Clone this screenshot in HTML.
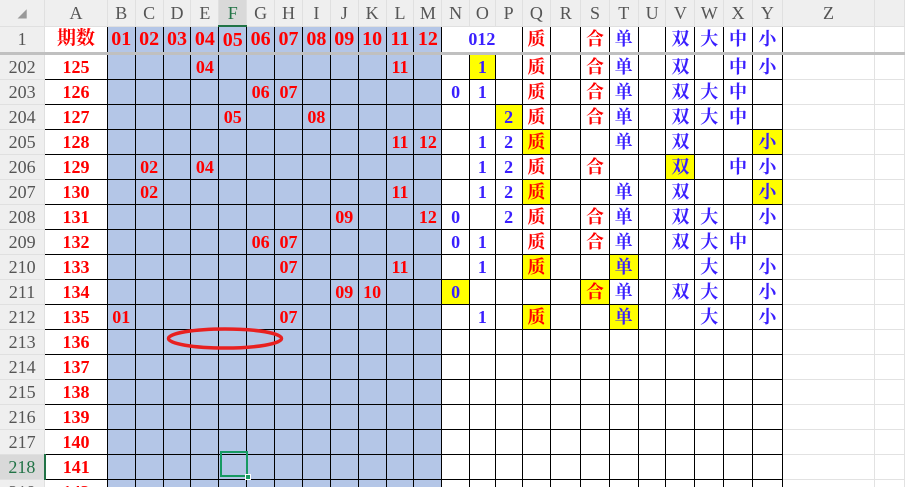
<!DOCTYPE html>
<html><head><meta charset="utf-8">
<style>
html,body{margin:0;padding:0;background:#fff;width:905px;height:487px;overflow:hidden;position:relative}
table{border-collapse:collapse;table-layout:fixed;position:absolute;left:0;top:0}
td{padding:0;height:24px;text-align:center;vertical-align:middle;border:1px solid #000;font-family:"Liberation Serif","Noto Serif CJK SC",serif;font-weight:bold;font-size:18px;color:#f00;white-space:nowrap;overflow:hidden;line-height:20px}
tr.h td{height:25px;background:#efefef;border:1px solid #e0e0e0;border-top:none;font-weight:normal;color:#555;font-size:18px;font-family:"Liberation Serif",serif}
td.rh{background:#efefef;border:1px solid #e0e0e0;border-left:none;font-weight:normal;color:#555;font-size:18px;font-family:"Liberation Serif",serif}
td.b{background:#b4c6e7}
td.y{background:#ff0}
td.u{color:#3a1fff}
td.q,td.u{font-family:"Liberation Serif","Noto Serif CJK SC",serif}
td.z{border:1px solid #e2e2e2}
tr.r1 td{height:25px}
tr.r1 td.b{font-size:20px}
tr.r1 td.a{border-top:none;font-size:19px}
</style></head><body>
<table>
<colgroup><col style="width:45px"><col style="width:63px">
<col style="width:28px"><col style="width:28px"><col style="width:28px"><col style="width:28px"><col style="width:28px"><col style="width:28px"><col style="width:28px"><col style="width:28px"><col style="width:28px"><col style="width:28px"><col style="width:28px"><col style="width:28px">
<col style="width:28px"><col style="width:26px"><col style="width:27px"><col style="width:29px"><col style="width:30px"><col style="width:29px"><col style="width:29px"><col style="width:28px"><col style="width:29px"><col style="width:29px"><col style="width:29px"><col style="width:30px"><col style="width:94px"><col style="width:30px"></colgroup>
<tr class="h"><td style="border-left:none;color:#999;font-size:12px">◢</td><td>A</td><td>B</td><td>C</td><td>D</td><td>E</td><td style="background:#d9d9d9;color:#217346;border-bottom:2px solid #217346">F</td><td>G</td><td>H</td><td>I</td><td>J</td><td>K</td><td>L</td><td>M</td><td>N</td><td>O</td><td>P</td><td>Q</td><td>R</td><td>S</td><td>T</td><td>U</td><td>V</td><td>W</td><td>X</td><td>Y</td><td>Z</td><td></td></tr>
<tr class="r1" style="border-bottom:3px solid #c0c0c0"><td class="rh">1</td><td class="a q" style="border-left:none">期数</td><td class="b">01</td><td class="b">02</td><td class="b">03</td><td class="b">04</td><td class="b">05</td><td class="b">06</td><td class="b">07</td><td class="b">08</td><td class="b">09</td><td class="b">10</td><td class="b">11</td><td class="b">12</td><td class="u" colspan="3" style="border-top:none">012</td><td class="q" style="border-top:none">质</td><td style="border-top:none"></td><td class="q" style="border-top:none">合</td><td class="u" style="border-top:none">单</td><td style="border-top:none"></td><td class="u" style="border-top:none">双</td><td class="u" style="border-top:none">大</td><td class="u" style="border-top:none">中</td><td class="u" style="border-top:none">小</td><td class="z"></td><td class="z"></td></tr>
<tr><td class="rh">202</td><td>125</td><td class="b"></td><td class="b"></td><td class="b"></td><td class="b">04</td><td class="b"></td><td class="b"></td><td class="b"></td><td class="b"></td><td class="b"></td><td class="b"></td><td class="b">11</td><td class="b"></td><td></td><td class="u y">1</td><td></td><td class="q">质</td><td></td><td class="q">合</td><td class="u">单</td><td></td><td class="u">双</td><td></td><td class="u">中</td><td class="u">小</td><td class="z"></td><td class="z"></td></tr>
<tr><td class="rh">203</td><td>126</td><td class="b"></td><td class="b"></td><td class="b"></td><td class="b"></td><td class="b"></td><td class="b">06</td><td class="b">07</td><td class="b"></td><td class="b"></td><td class="b"></td><td class="b"></td><td class="b"></td><td class="u">0</td><td class="u">1</td><td></td><td class="q">质</td><td></td><td class="q">合</td><td class="u">单</td><td></td><td class="u">双</td><td class="u">大</td><td class="u">中</td><td></td><td class="z"></td><td class="z"></td></tr>
<tr><td class="rh">204</td><td>127</td><td class="b"></td><td class="b"></td><td class="b"></td><td class="b"></td><td class="b">05</td><td class="b"></td><td class="b"></td><td class="b">08</td><td class="b"></td><td class="b"></td><td class="b"></td><td class="b"></td><td></td><td></td><td class="u y">2</td><td class="q">质</td><td></td><td class="q">合</td><td class="u">单</td><td></td><td class="u">双</td><td class="u">大</td><td class="u">中</td><td></td><td class="z"></td><td class="z"></td></tr>
<tr><td class="rh">205</td><td>128</td><td class="b"></td><td class="b"></td><td class="b"></td><td class="b"></td><td class="b"></td><td class="b"></td><td class="b"></td><td class="b"></td><td class="b"></td><td class="b"></td><td class="b">11</td><td class="b">12</td><td></td><td class="u">1</td><td class="u">2</td><td class="q y">质</td><td></td><td></td><td class="u">单</td><td></td><td class="u">双</td><td></td><td></td><td class="u y">小</td><td class="z"></td><td class="z"></td></tr>
<tr><td class="rh">206</td><td>129</td><td class="b"></td><td class="b">02</td><td class="b"></td><td class="b">04</td><td class="b"></td><td class="b"></td><td class="b"></td><td class="b"></td><td class="b"></td><td class="b"></td><td class="b"></td><td class="b"></td><td></td><td class="u">1</td><td class="u">2</td><td class="q">质</td><td></td><td class="q">合</td><td></td><td></td><td class="u y">双</td><td></td><td class="u">中</td><td class="u">小</td><td class="z"></td><td class="z"></td></tr>
<tr><td class="rh">207</td><td>130</td><td class="b"></td><td class="b">02</td><td class="b"></td><td class="b"></td><td class="b"></td><td class="b"></td><td class="b"></td><td class="b"></td><td class="b"></td><td class="b"></td><td class="b">11</td><td class="b"></td><td></td><td class="u">1</td><td class="u">2</td><td class="q y">质</td><td></td><td></td><td class="u">单</td><td></td><td class="u">双</td><td></td><td></td><td class="u y">小</td><td class="z"></td><td class="z"></td></tr>
<tr><td class="rh">208</td><td>131</td><td class="b"></td><td class="b"></td><td class="b"></td><td class="b"></td><td class="b"></td><td class="b"></td><td class="b"></td><td class="b"></td><td class="b">09</td><td class="b"></td><td class="b"></td><td class="b">12</td><td class="u">0</td><td></td><td class="u">2</td><td class="q">质</td><td></td><td class="q">合</td><td class="u">单</td><td></td><td class="u">双</td><td class="u">大</td><td></td><td class="u">小</td><td class="z"></td><td class="z"></td></tr>
<tr><td class="rh">209</td><td>132</td><td class="b"></td><td class="b"></td><td class="b"></td><td class="b"></td><td class="b"></td><td class="b">06</td><td class="b">07</td><td class="b"></td><td class="b"></td><td class="b"></td><td class="b"></td><td class="b"></td><td class="u">0</td><td class="u">1</td><td></td><td class="q">质</td><td></td><td class="q">合</td><td class="u">单</td><td></td><td class="u">双</td><td class="u">大</td><td class="u">中</td><td></td><td class="z"></td><td class="z"></td></tr>
<tr><td class="rh">210</td><td>133</td><td class="b"></td><td class="b"></td><td class="b"></td><td class="b"></td><td class="b"></td><td class="b"></td><td class="b">07</td><td class="b"></td><td class="b"></td><td class="b"></td><td class="b">11</td><td class="b"></td><td></td><td class="u">1</td><td></td><td class="q y">质</td><td></td><td></td><td class="u y">单</td><td></td><td></td><td class="u">大</td><td></td><td class="u">小</td><td class="z"></td><td class="z"></td></tr>
<tr><td class="rh">211</td><td>134</td><td class="b"></td><td class="b"></td><td class="b"></td><td class="b"></td><td class="b"></td><td class="b"></td><td class="b"></td><td class="b"></td><td class="b">09</td><td class="b">10</td><td class="b"></td><td class="b"></td><td class="u y">0</td><td></td><td></td><td></td><td></td><td class="q y">合</td><td class="u">单</td><td></td><td class="u">双</td><td class="u">大</td><td></td><td class="u">小</td><td class="z"></td><td class="z"></td></tr>
<tr><td class="rh">212</td><td>135</td><td class="b">01</td><td class="b"></td><td class="b"></td><td class="b"></td><td class="b"></td><td class="b"></td><td class="b">07</td><td class="b"></td><td class="b"></td><td class="b"></td><td class="b"></td><td class="b"></td><td></td><td class="u">1</td><td></td><td class="q y">质</td><td></td><td></td><td class="u y">单</td><td></td><td></td><td class="u">大</td><td></td><td class="u">小</td><td class="z"></td><td class="z"></td></tr>
<tr><td class="rh">213</td><td>136</td><td class="b"></td><td class="b"></td><td class="b"></td><td class="b"></td><td class="b"></td><td class="b"></td><td class="b"></td><td class="b"></td><td class="b"></td><td class="b"></td><td class="b"></td><td class="b"></td><td></td><td></td><td></td><td></td><td></td><td></td><td></td><td></td><td></td><td></td><td></td><td></td><td class="z"></td><td class="z"></td></tr>
<tr><td class="rh">214</td><td>137</td><td class="b"></td><td class="b"></td><td class="b"></td><td class="b"></td><td class="b"></td><td class="b"></td><td class="b"></td><td class="b"></td><td class="b"></td><td class="b"></td><td class="b"></td><td class="b"></td><td></td><td></td><td></td><td></td><td></td><td></td><td></td><td></td><td></td><td></td><td></td><td></td><td class="z"></td><td class="z"></td></tr>
<tr><td class="rh">215</td><td>138</td><td class="b"></td><td class="b"></td><td class="b"></td><td class="b"></td><td class="b"></td><td class="b"></td><td class="b"></td><td class="b"></td><td class="b"></td><td class="b"></td><td class="b"></td><td class="b"></td><td></td><td></td><td></td><td></td><td></td><td></td><td></td><td></td><td></td><td></td><td></td><td></td><td class="z"></td><td class="z"></td></tr>
<tr><td class="rh">216</td><td>139</td><td class="b"></td><td class="b"></td><td class="b"></td><td class="b"></td><td class="b"></td><td class="b"></td><td class="b"></td><td class="b"></td><td class="b"></td><td class="b"></td><td class="b"></td><td class="b"></td><td></td><td></td><td></td><td></td><td></td><td></td><td></td><td></td><td></td><td></td><td></td><td></td><td class="z"></td><td class="z"></td></tr>
<tr><td class="rh">217</td><td>140</td><td class="b"></td><td class="b"></td><td class="b"></td><td class="b"></td><td class="b"></td><td class="b"></td><td class="b"></td><td class="b"></td><td class="b"></td><td class="b"></td><td class="b"></td><td class="b"></td><td></td><td></td><td></td><td></td><td></td><td></td><td></td><td></td><td></td><td></td><td></td><td></td><td class="z"></td><td class="z"></td></tr>
<tr><td class="rh" style="background:#d9d9d9;color:#217346;border-right:2px solid #217346">218</td><td>141</td><td class="b"></td><td class="b"></td><td class="b"></td><td class="b"></td><td class="b"></td><td class="b"></td><td class="b"></td><td class="b"></td><td class="b"></td><td class="b"></td><td class="b"></td><td class="b"></td><td></td><td></td><td></td><td></td><td></td><td></td><td></td><td></td><td></td><td></td><td></td><td></td><td class="z"></td><td class="z"></td></tr>
<tr><td class="rh">219</td><td>142</td><td class="b"></td><td class="b"></td><td class="b"></td><td class="b"></td><td class="b"></td><td class="b"></td><td class="b"></td><td class="b"></td><td class="b"></td><td class="b"></td><td class="b"></td><td class="b"></td><td></td><td></td><td></td><td></td><td></td><td></td><td></td><td></td><td></td><td></td><td></td><td></td><td class="z"></td><td class="z"></td></tr>
</table>
<div style="position:absolute;left:220px;top:451px;width:24px;height:22px;border:2px solid #169a62"></div>
<div style="position:absolute;left:245px;top:474px;width:4px;height:4px;background:#169a62;border:1px solid #fff"></div>
<svg style="position:absolute;left:0;top:0" width="905" height="487"><ellipse cx="225" cy="338.5" rx="56.5" ry="9.5" fill="none" stroke="#e82020" stroke-width="3.5"/></svg>
</body></html>
